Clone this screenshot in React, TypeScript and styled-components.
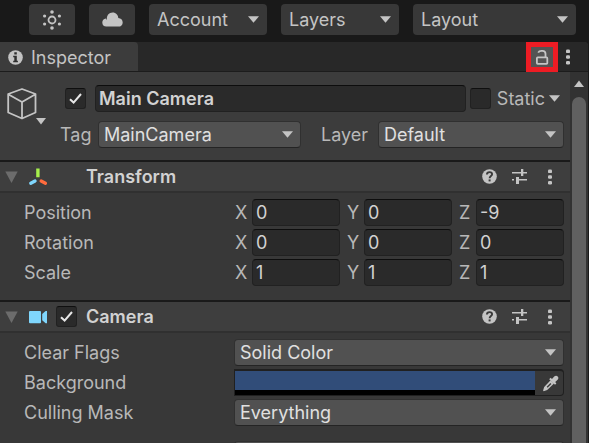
import React from "react";
import styled, { createGlobalStyle, css } from "styled-components";

const GlobalStyle = createGlobalStyle`
  * { box-sizing: border-box; }
  html, body { margin: 0; background: #191919; }
  body, button, input, select {
    font-family: Inter, "Liberation Sans", sans-serif;
    font-size: 18px;
    font-optical-sizing: none;
    line-height: 24px;
    color: #c4c4c4;
  }
  button, input, select { margin: 0; }
`;

const Window = styled.div`
  display: flex;
  flex-direction: column;
  height: 100vh;
  overflow: hidden;
`;

const Toolbar = styled.header`
  display: flex;
  flex: none;
  justify-content: flex-end;
  gap: 14px;
  padding: 4px 13px 7px;
`;

const ToolbarButton = styled.button`
  display: flex;
  align-items: center;
  justify-content: center;
  width: 46px;
  height: 31px;
  padding: 0;
  border: 0;
  border-radius: 4px;
  background: #383838;
`;

const SelectFrame = styled.div<{ $toolbar?: boolean; $width?: number }>`
  display: grid;
  align-items: center;
  min-width: 0;
  ${(p) => (p.$width ? css`flex: none; width: ${p.$width}px;` : css`flex: 1;`)}
  height: ${(p) => (p.$toolbar ? 31 : 27)}px;

  select {
    grid-area: 1 / 1;
    appearance: none;
    width: 100%;
    height: 100%;
    padding: 0 24px 0 ${(p) => (p.$toolbar ? 8 : 5)}px;
    border: ${(p) => (p.$toolbar ? "0" : "1px solid #303030")};
    border-bottom-color: #242424;
    border-radius: 4px;
    background: ${(p) => (p.$toolbar ? "#383838" : "#515151")};
    color: ${(p) => (p.$toolbar ? "#c4c4c4" : "#e0e0e0")};
  }

  svg {
    grid-area: 1 / 1;
    justify-self: end;
    margin-right: 8px;
    pointer-events: none;
  }
`;

const Panel = styled.main`
  display: flex;
  flex: 1;
  flex-direction: column;
  min-height: 0;
  margin-right: 1px;
  border-radius: 0 4px 0 0;
  background: #383838;
  overflow: hidden;
`;

const TabBar = styled.div`
  display: flex;
  flex: none;
  align-items: stretch;
  height: 30px;
  border-bottom: 1px solid #1c1c1c;
  background: #282828;
`;

const Tab = styled.button`
  display: flex;
  align-items: center;
  gap: 8px;
  width: 138px;
  padding: 2px 0 0 8px;
  border: 0;
  border-radius: 0 4px 0 0;
  background: #3c3c3c;
`;

const TabActions = styled.div`
  display: flex;
  align-items: stretch;
  margin-left: auto;
  padding-right: 12px;
  gap: 2px;
`;

const LockButton = styled.button`
  display: flex;
  flex: none;
  align-items: center;
  justify-content: center;
  width: 32px;
  height: 30px;
  padding: 0;
  border: 5px solid #ed1c24;
  background: #545454;
`;

const IconButton = styled.button`
  display: flex;
  align-items: center;
  justify-content: center;
  flex: none;
  padding: 0;
  border: 0;
  background: none;
`;

const Body = styled.div`
  display: flex;
  flex: 1;
  min-height: 0;
`;

const Content = styled.div`
  flex: 1;
  min-width: 0;
  overflow: hidden;
`;

const Scrollbar = styled.div`
  display: flex;
  flex: none;
  flex-direction: column;
  align-items: center;
  width: 18px;
  padding-top: 8px;
  background: #323232;
`;

const Thumb = styled.div`
  flex: 1;
  width: 14px;
  margin-top: 10px;
  border-radius: 7px 7px 0 0;
  background: #606060;
`;

const ObjectHeader = styled.section`
  display: flex;
  gap: 8px;
  padding: 13px 6px 12px 7px;
  background: #3c3c3c;
`;

const ObjectIconButton = styled(IconButton)`
  align-self: flex-start;
  margin-top: 3px;
`;

const ObjectFields = styled.div`
  display: flex;
  flex: 1;
  flex-direction: column;
  gap: 9px;
  min-width: 0;
`;

const ObjectLine = styled.div<{ $inset?: boolean }>`
  display: flex;
  align-items: center;
  height: 27px;
  padding-left: ${(p) => (p.$inset ? 5 : 0)}px;
`;

const LabelText = styled.label<{ $width: number }>`
  flex: none;
  width: ${(p) => p.$width}px;
  color: #b8b8b8;
  white-space: nowrap;
`;

const IndentedLabel = styled(LabelText)<{ $indent: number }>`
  margin-left: ${(p) => p.$indent}px;
`;

const CheckboxFrame = styled.span`
  display: grid;
  flex: none;
  place-items: center;
  width: 21px;
  height: 21px;

  input {
    grid-area: 1 / 1;
    appearance: none;
    width: 21px;
    height: 21px;
    border: 1px solid #212121;
    border-top-color: #0f0f0f;
    border-radius: 3px;
    background: #2a2a2a;
  }

  svg {
    grid-area: 1 / 1;
    visibility: hidden;
    pointer-events: none;
  }

  input:checked + svg {
    visibility: visible;
  }
`;

const TextField = styled.input<{ $strong?: boolean }>`
  flex: 1;
  width: 0;
  min-width: 0;
  height: 27px;
  padding: 0 3px;
  border: 1px solid #212121;
  border-top-color: #0d0d0d;
  border-radius: 4px;
  background: #2a2a2a;
  color: #d2d2d2;
  font-weight: ${(p) => (p.$strong ? 600 : 400)};
`;

const NameField = styled(TextField)`
  margin: 0 4px 0 9px;
`;

const StaticLabel = styled.label`
  margin: 0 4px 0 6px;
  color: #b8b8b8;
`;

const StaticMenu = styled(IconButton)`
  margin-right: 4px;
`;

const Component = styled.section`
  border-top: 2px solid #1a1a1a;
`;

const ComponentHeader = styled.div`
  display: flex;
  align-items: center;
  height: 31px;
  padding: 0 12px 0 5px;
  border-bottom: 2px solid #303030;
  background: #3e3e3e;
`;

const ComponentIcon = styled.span`
  display: flex;
  flex: none;
  width: 28px;
  margin-left: 10px;
`;

const ToggleSlot = styled.span`
  display: flex;
  flex: none;
  width: 30px;
`;

const ComponentTitle = styled.h2`
  flex: 1;
  margin: 0;
  color: #d2d2d2;
  font-size: 18px;
  font-weight: 600;
  line-height: 24px;
`;

const HeaderActions = styled.div`
  display: flex;
  align-items: center;
  gap: 15px;
`;

const Rows = styled.div`
  display: flex;
  flex-direction: column;
  gap: 3px;
  padding: 6px 6px 14px 24px;
`;

const Row = styled.div`
  display: flex;
  align-items: center;
  height: 27px;
`;

const LaterRow = styled(Row)`
  margin-top: 12px;
`;

const VectorFields = styled.div`
  display: grid;
  flex: 1;
  grid-template-columns: repeat(3, minmax(0, 1fr));
  gap: 7px;
`;

const Axis = styled.div`
  display: flex;
  align-items: center;
`;

const ColorField = styled.div`
  display: flex;
  flex: 1;
  height: 27px;
  border: 1px solid #202020;
  border-top-width: 2px;
  border-radius: 0 4px 4px 0;
`;

const Swatch = styled.button`
  flex: 1;
  padding: 0;
  border: 0;
  border-bottom: 5px solid #000;
  background: #314d79;
`;

const PickerButton = styled(IconButton)`
  width: 28px;
  padding-left: 3px;
`;

const DotsSlot = styled.span`
  display: flex;
  justify-content: center;
  width: 16px;
`;

const Arrow = () => (
  <svg width="11" height="7" viewBox="0 0 11 7" aria-hidden="true">
    <path d="M0 0.3H11L5.5 6.8Z" fill="#c4c4c4" />
  </svg>
);

const ScrollArrow = () => (
  <svg width="10" height="7" viewBox="0 0 10 7" aria-hidden="true">
    <path d="M0 7H10L5 0.5Z" fill="#c4c4c4" />
  </svg>
);

const Foldout = () => (
  <svg width="13" height="12" viewBox="0 0 13 12" aria-hidden="true">
    <path d="M0.3 0.5H12.7L6.5 12Z" fill="#6c6c6c" />
  </svg>
);

const Check = () => (
  <svg width="15" height="13" viewBox="0 0 15 13" aria-hidden="true">
    <path d="M2 7.2L5.6 10.6L13 2" fill="none" stroke="#e6e6e6" strokeWidth="2" />
  </svg>
);

const Dots = () => (
  <svg width="4" height="16" viewBox="0 0 4 16" fill="#c4c4c4" aria-hidden="true">
    <rect x="0" y="0.5" width="4" height="3.6" rx="1.2" />
    <rect x="0" y="6.2" width="4" height="3.6" rx="1.2" />
    <rect x="0" y="11.9" width="4" height="3.6" rx="1.2" />
  </svg>
);

const ActionDots = () => (
  <DotsSlot>
    <Dots />
  </DotsSlot>
);

const SunIcon = () => (
  <svg width="20" height="20" viewBox="0 0 20 20" fill="#c4c4c4" aria-hidden="true">
    <circle cx="10" cy="10" r="3.5" fill="none" stroke="#c4c4c4" strokeWidth="1.8" />
    <circle cx="10" cy="2" r="1.8" />
    <circle cx="10" cy="18" r="1.8" />
    <circle cx="2.6" cy="6" r="1.6" />
    <circle cx="17.4" cy="6" r="1.6" />
    <circle cx="2.6" cy="14" r="1.6" />
    <circle cx="17.4" cy="14" r="1.6" />
  </svg>
);

const CloudIcon = () => (
  <svg width="21" height="15" viewBox="0 0 21 15" aria-hidden="true">
    <path
      d="M4.3 14.6A4.2 4.2 0 0 1 .3 10.5C.3 8.3 1.8 6.8 3.7 6.5L4.9 8C4.3 3.5 7 .5 10.6.5C14 .5 16.2 3 16.3 6C18.9 6.2 20.7 8 20.7 10.4C20.7 12.8 18.9 14.6 16.5 14.6Z"
      fill="#c4c4c4"
    />
  </svg>
);

const InfoIcon = () => (
  <svg width="15" height="15" viewBox="0 0 15 15" aria-hidden="true">
    <circle cx="7.5" cy="7.5" r="7.3" fill="#c4c4c4" />
    <path d="M6.3 2.3H8.8V4.4H6.3ZM5.2 5.8H8.8V10.8H9.9V12.2H5.2V10.8H6.3V7.2H5.2Z" fill="#303030" />
  </svg>
);

const LockIcon = () => (
  <svg width="14" height="17" viewBox="0 0 14 17" fill="none" stroke="#c4c4c4" aria-hidden="true">
    <rect x="1.9" y="8.4" width="10.4" height="6.4" rx="0.8" strokeWidth="1.8" />
    <path d="M3.2 3.6C3.8 2.3 4.8 1.8 6.6 1.8H7.4C9.6 1.8 10.5 3 10.5 4.8V8" strokeWidth="1.8" />
  </svg>
);

const CubeIcon = () => (
  <svg width="45" height="38" viewBox="0 0 45 38" aria-hidden="true">
    <path
      d="M15 1L28.5 6V24.5L15 30.5L1.2 24.5V6ZM1.2 6.2L15 14L28.5 6.2M15 14V30.5"
      fill="none"
      stroke="#c4c4c4"
      strokeWidth="1.8"
      strokeLinejoin="round"
    />
    <path d="M29 30H39L34 36.4Z" fill="#c4c4c4" />
  </svg>
);

const TransformIcon = () => (
  <svg width="20" height="18" viewBox="0 0 20 18" strokeWidth="3.4" strokeLinecap="round" aria-hidden="true">
    <path d="M9.9 2.2V7.6" stroke="#a6f04c" strokeLinecap="square" />
    <path d="M7 13L2.8 15.2" stroke="#7fd6fd" />
    <path d="M13.2 13L17.4 15.2" stroke="#ff6b3d" />
  </svg>
);

const CameraIcon = () => (
  <svg width="20" height="14" viewBox="0 0 20 14" fill="#7fd6fd" aria-hidden="true">
    <rect x="1" y="1" width="12" height="12.2" rx="1" />
    <path d="M19 1V13.2H17.6L14.2 10.2V4.1L17.6 1Z" />
  </svg>
);

const HelpIcon = () => (
  <svg width="15" height="15" viewBox="0 0 15 15" aria-hidden="true">
    <circle cx="7.5" cy="7.5" r="7.3" fill="#c4c4c4" />
    <path d="M4.9 5.5C5 3.8 6 3.1 7.5 3.1C9 3.1 10.1 4 10.1 5.3C10.1 7 7.6 7.1 7.6 9.2" fill="none" stroke="#3a3a3a" strokeWidth="1.9" />
    <rect x="6.6" y="10.4" width="2" height="2" fill="#3a3a3a" />
  </svg>
);

const PresetIcon = () => (
  <svg width="15" height="15" viewBox="0 0 15 15" fill="#c4c4c4" aria-hidden="true">
    <rect x="0" y="3" width="9" height="1.5" />
    <rect x="9" y="0" width="2.3" height="7" />
    <rect x="11" y="3" width="4" height="1.5" />
    <rect x="0" y="10" width="2" height="1.5" />
    <rect x="4" y="8" width="3" height="7" />
    <rect x="7" y="10" width="8" height="1.5" />
  </svg>
);

const DropperIcon = () => (
  <svg width="17" height="17" viewBox="0 0 17 17" aria-hidden="true">
    <path d="M8.6 5.2L12 8.6L5.2 15L1.6 16.2L1.1 15.6L2.2 12Z" fill="#c4c4c4" />
    <path d="M8.4 8.1L9.4 9.1L5.6 12.7L4.7 11.8Z" fill="#383838" />
    <path d="M7.2 4.2L8.6 2.8L10 4.1L12.2 1.6C13.2.5 14.8.5 15.7 1.4C16.7 2.4 16.5 3.8 15.6 4.8L13.2 7L14.4 8.4L13 9.8Z" fill="#c4c4c4" />
  </svg>
);

type DropdownProps = {
  value: string;
  id?: string;
  label?: string;
  toolbar?: boolean;
  width?: number;
};

const Dropdown = ({ value, id, label, toolbar, width }: DropdownProps) => (
  <SelectFrame $toolbar={toolbar} $width={width}>
    <select id={id} aria-label={label} defaultValue={value}>
      <option>{value}</option>
    </select>
    <Arrow />
  </SelectFrame>
);

const Checkbox = ({ id, label, checked }: { id?: string; label?: string; checked?: boolean }) => (
  <CheckboxFrame>
    <input type="checkbox" id={id} aria-label={label} defaultChecked={checked} />
    <Check />
  </CheckboxFrame>
);

const SectionHeader = ({ title, icon, toggle }: { title: string; icon: React.ReactNode; toggle?: boolean }) => (
  <ComponentHeader>
    <IconButton aria-label={`Collapse ${title}`}>
      <Foldout />
    </IconButton>
    <ComponentIcon>{icon}</ComponentIcon>
    <ToggleSlot>{toggle && <Checkbox label={`Enable ${title}`} checked />}</ToggleSlot>
    <ComponentTitle>{title}</ComponentTitle>
    <HeaderActions>
      <IconButton aria-label={`${title} help`}>
        <HelpIcon />
      </IconButton>
      <IconButton aria-label={`${title} presets`}>
        <PresetIcon />
      </IconButton>
      <IconButton aria-label={`${title} options`}>
        <ActionDots />
      </IconButton>
    </HeaderActions>
  </ComponentHeader>
);

const vectors = [
  { name: "Position", values: ["0", "0", "-9"] },
  { name: "Rotation", values: ["0", "0", "0"] },
  { name: "Scale", values: ["1", "1", "1"] },
];

const axes = ["X", "Y", "Z"];

export default function App() {
  return (
    <>
      <GlobalStyle />
      <Window>
        <Toolbar>
          <ToolbarButton aria-label="Services">
            <SunIcon />
          </ToolbarButton>
          <ToolbarButton aria-label="Cloud">
            <CloudIcon />
          </ToolbarButton>
          <Dropdown toolbar width={118} value="Account" label="Account" />
          <Dropdown toolbar width={118} value="Layers" label="Layers" />
          <Dropdown toolbar width={163} value="Layout" label="Layout" />
        </Toolbar>
        <Panel>
          <TabBar>
            <Tab>
              <InfoIcon />
              Inspector
            </Tab>
            <TabActions>
              <LockButton aria-label="Lock">
                <LockIcon />
              </LockButton>
              <IconButton aria-label="Inspector options">
                <ActionDots />
              </IconButton>
            </TabActions>
          </TabBar>
          <Body>
            <Content>
              <ObjectHeader>
                <ObjectIconButton aria-label="Object icon">
                  <CubeIcon />
                </ObjectIconButton>
                <ObjectFields>
                  <ObjectLine $inset>
                    <Checkbox label="Active" checked />
                    <NameField $strong aria-label="Name" defaultValue="Main Camera" />
                    <Checkbox id="static" />
                    <StaticLabel htmlFor="static">Static</StaticLabel>
                    <StaticMenu aria-label="Static options">
                      <Arrow />
                    </StaticMenu>
                  </ObjectLine>
                  <ObjectLine>
                    <LabelText $width={38} htmlFor="tag">Tag</LabelText>
                    <Dropdown id="tag" value="MainCamera" width={203} />
                    <IndentedLabel $indent={20} $width={57} htmlFor="layer">Layer</IndentedLabel>
                    <Dropdown id="layer" value="Default" />
                  </ObjectLine>
                </ObjectFields>
              </ObjectHeader>

              <Component>
                <SectionHeader title="Transform" icon={<TransformIcon />} />
                <Rows>
                  {vectors.map((vector) => (
                    <Row key={vector.name}>
                      <LabelText as="span" $width={211}>{vector.name}</LabelText>
                      <VectorFields>
                        {axes.map((axis, i) => (
                          <Axis key={axis}>
                            <LabelText $width={17} htmlFor={vector.name + axis}>{axis}</LabelText>
                            <TextField id={vector.name + axis} defaultValue={vector.values[i]} />
                          </Axis>
                        ))}
                      </VectorFields>
                    </Row>
                  ))}
                </Rows>
              </Component>

              <Component>
                <SectionHeader title="Camera" icon={<CameraIcon />} toggle />
                <Rows>
                  <Row>
                    <LabelText $width={210} htmlFor="flags">Clear Flags</LabelText>
                    <Dropdown id="flags" value="Solid Color" />
                  </Row>
                  <Row>
                    <LabelText $width={210} htmlFor="background">Background</LabelText>
                    <ColorField>
                      <Swatch id="background" />
                      <PickerButton aria-label="Pick color">
                        <DropperIcon />
                      </PickerButton>
                    </ColorField>
                  </Row>
                  <Row>
                    <LabelText $width={210} htmlFor="mask">Culling Mask</LabelText>
                    <Dropdown id="mask" value="Everything" />
                  </Row>
                  <LaterRow>
                    <LabelText as="span" $width={210} />
                    <Dropdown label="Projection" value="" />
                  </LaterRow>
                </Rows>
              </Component>
            </Content>
            <Scrollbar>
              <ScrollArrow />
              <Thumb />
            </Scrollbar>
          </Body>
        </Panel>
      </Window>
    </>
  );
}
